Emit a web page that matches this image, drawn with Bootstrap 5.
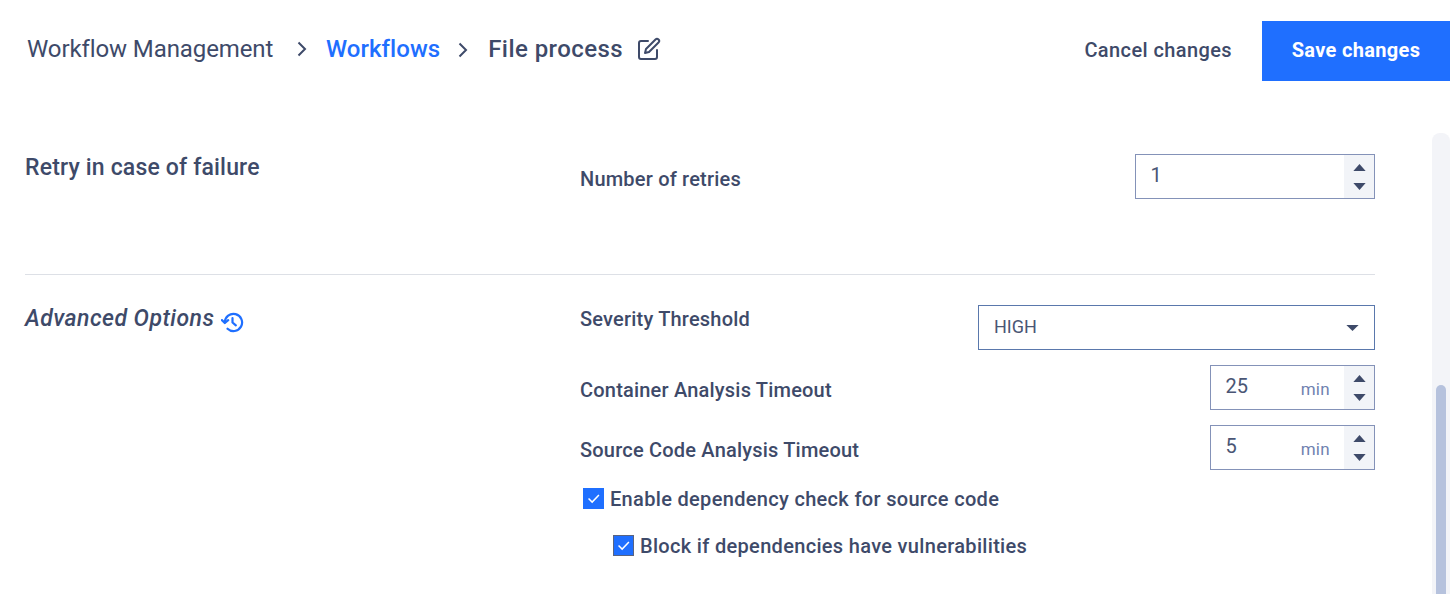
<!DOCTYPE html>
<html lang="en">
<head>
<meta charset="utf-8">
<title>File process</title>
<link href="https://cdn.jsdelivr.net/npm/bootstrap@5.3.0/dist/css/bootstrap.min.css" rel="stylesheet">
<style>
html,body{height:594px;overflow:hidden;background:#fff}
body{font-family:Roboto,"Liberation Sans",sans-serif;color:#3e4a69;font-size:19px}
.top-bar{height:81px;padding-left:27px;padding-right:2px}
.crumb{font-size:24px;line-height:28px;padding-top:17px}
.crumb-root{width:270px;letter-spacing:-.1px}
.crumb-link{color:#1f6fff;font-weight:500;text-decoration:none;letter-spacing:.05px}
.crumb-cur{font-weight:500;letter-spacing:.43px}
.chev{display:block}
.chev-a{margin-right:19px}
.chev-b{margin:2px 20px 0 18px}
.edit-ic{margin-left:14px}
.cancel-btn{font-size:20px;font-weight:500;color:#3e4a69;padding:0 0 2px;margin-right:30px;border:0;letter-spacing:.4px}
.save-btn{width:188px;height:60px;background:#1f6fff;border:0;border-radius:0;color:#fff;font-weight:700;font-size:20px;letter-spacing:.33px;padding:0 0 2px}
.page-main{padding-left:25px}
.content-col{width:1350px}
.side-col{width:555px;flex:none}
.side-title{font-size:23px;line-height:28px;font-weight:500;letter-spacing:.17px}
.retry-title{margin-top:1px}
.adv-title{letter-spacing:.45px;margin-top:1px}
.hist-ic{margin-left:7px;margin-top:3px;margin-bottom:-3px}
.retry-sec{height:194px;padding-top:72px;border-bottom:1px solid #dde0e6}
.retry-field{margin-top:1px}
.adv-sec{padding-top:29px}
.field-col{padding-top:1px}
.field-lbl{font-size:20px;font-weight:500;letter-spacing:.2px;line-height:24px}
.chk-lbl{letter-spacing:.32px}
.retry-lbl{padding-top:13px}
.box-num{height:45px;border:1px solid #8492b8;background:#fff}
.w-retry{width:240px}
.w-min{width:165px}
.box-input{border:0;border-radius:0;box-shadow:none;padding:0 0 3px 14.500px;font-size:20px;color:#4a5675;background:transparent;min-width:0;height:100%}
.unit-txt{font-size:17px;color:#6f82b0;padding-right:14px;padding-top:5px;letter-spacing:.3px}
.spin-col{width:30px;background:#f2f4f8;flex:none;padding:9px 0 8px}
.sel-box.form-select{width:397px;height:45px;border:1px solid #5a78ac;border-radius:0;font-size:18px;color:#4a5675;padding:0 15px 2px;box-shadow:none;background-image:url("data:image/svg+xml,%3Csvg xmlns='http://www.w3.org/2000/svg' viewBox='0 0 14 8'%3E%3Cpath fill='%233e4a69' d='M0 1h14L7 8z'/%3E%3C/svg%3E");background-size:13px 7px;background-position:right 15px center}
.gap-rows{row-gap:15px}
.row-sev{height:45px}
.lbl-sev{margin-top:2px}
.lbl-mid{padding-top:13px}
.chk-wrap{padding-left:3px;margin-top:18px;height:21px}
.chk-wrap-sub{padding-left:33px;margin-top:26px;height:21px}
.chk-box.form-check-input,.chk-box.form-check-input:checked{width:21px;height:21px;margin:0 6px 0 0;border-radius:0;background-color:#1f6fff;border:1px solid #1f6fff;flex:none;background-size:100% 100%;background-image:url("data:image/svg+xml,%3Csvg xmlns='http://www.w3.org/2000/svg' viewBox='0 0 21 21'%3E%3Cpath fill='none' stroke='%23fff' stroke-width='1.6' d='M5 10.500l4 4 7.500-8'/%3E%3C/svg%3E")}
.chk-box.chk-sub.form-check-input{border-color:#5a6480}
.scroll-rail{width:18px;height:461px;margin-left:57px;margin-top:52px;background:#f3f4f8;border-radius:8px 8px 0 0;padding:252px 4px 0;flex:none}
.scroll-thumb{height:100%;background:#b6c2dd;border-radius:5px 5px 0 0}
</style>
</head>
<body>
<header class="top-bar d-flex align-items-center justify-content-between">
  <nav class="d-flex align-items-center crumb" aria-label="breadcrumb">
    <span class="crumb-root">Workflow Management</span>
    <svg class="chev chev-a" width="10" height="16" viewBox="0 0 10 16" fill="none" stroke="#3e4a69" stroke-width="2"><path d="M1.500 1.500 8 8l-6.500 6.500"/></svg>
    <a href="#" class="crumb-link">Workflows</a>
    <svg class="chev chev-b" width="10" height="16" viewBox="0 0 10 16" fill="none" stroke="#3e4a69" stroke-width="2"><path d="M1.500 1.500 8 8l-6.500 6.500"/></svg>
    <span class="crumb-cur">File process</span>
    <svg class="edit-ic" width="24" height="24" viewBox="0 0 24 24" fill="none" stroke="#3e4a69" stroke-width="2" stroke-linejoin="round" stroke-linecap="round"><path d="M11 4H4a2 2 0 0 0-2 2v14a2 2 0 0 0 2 2h14a2 2 0 0 0 2-2v-7"/><path d="M18.500 2.500a2.100 2.100 0 0 1 3 3L12 15l-4 1 1-4z"/></svg>
  </nav>
  <div class="d-flex align-items-center align-self-end">
    <button type="button" class="btn cancel-btn">Cancel changes</button>
    <button type="button" class="btn save-btn">Save changes</button>
  </div>
</header>
<main class="page-main d-flex">
  <div class="content-col">
    <section class="retry-sec d-flex">
      <div class="side-col"><div class="side-title retry-title">Retry in case of failure</div></div>
      <div class="flex-grow-1 d-flex justify-content-between retry-field">
        <label class="field-lbl retry-lbl" for="retries">Number of retries</label>
        <div class="box-num w-retry d-flex">
          <input id="retries" class="form-control box-input flex-grow-1" value="1">
          <div class="spin-col d-flex flex-column justify-content-between align-items-center">
            <svg width="13" height="7" viewBox="0 0 14 8"><path fill="#3e4a69" d="M0 8h14L7 0z"/></svg>
            <svg width="13" height="7" viewBox="0 0 14 8"><path fill="#3e4a69" d="M0 0h14L7 8z"/></svg>
          </div>
        </div>
      </div>
    </section>
    <section class="adv-sec d-flex">
      <div class="side-col">
        <div class="side-title adv-title fst-italic d-flex align-items-center">Advanced Options
          <svg class="hist-ic" width="23" height="23" viewBox="0 0 24 24" fill="none" stroke="#1f6fff" stroke-width="2.300" stroke-linecap="round" stroke-linejoin="round"><path d="M4 12a9 9 0 1 1 2.800 6.500"/><path d="M1 9.500l3 3 3.500-3"/><path d="M12 7.500V12l3.500 3"/></svg>
        </div>
      </div>
      <div class="flex-grow-1 field-col">
        <div class="d-flex flex-column gap-rows">
          <div class="d-flex justify-content-between row-sev">
            <label class="field-lbl lbl-sev" for="sev">Severity Threshold</label>
            <select id="sev" class="form-select sel-box"><option>HIGH</option></select>
          </div>
          <div class="d-flex justify-content-between">
            <label class="field-lbl lbl-mid" for="cto">Container Analysis Timeout</label>
            <div class="box-num w-min d-flex">
              <input id="cto" class="form-control box-input flex-grow-1" value="25">
              <span class="unit-txt d-flex align-items-center">min</span>
              <div class="spin-col d-flex flex-column justify-content-between align-items-center">
                <svg width="13" height="7" viewBox="0 0 14 8"><path fill="#3e4a69" d="M0 8h14L7 0z"/></svg>
                <svg width="13" height="7" viewBox="0 0 14 8"><path fill="#3e4a69" d="M0 0h14L7 8z"/></svg>
              </div>
            </div>
          </div>
          <div class="d-flex justify-content-between">
            <label class="field-lbl lbl-mid" for="sto">Source Code Analysis Timeout</label>
            <div class="box-num w-min d-flex">
              <input id="sto" class="form-control box-input flex-grow-1" value="5">
              <span class="unit-txt d-flex align-items-center">min</span>
              <div class="spin-col d-flex flex-column justify-content-between align-items-center">
                <svg width="13" height="7" viewBox="0 0 14 8"><path fill="#3e4a69" d="M0 8h14L7 0z"/></svg>
                <svg width="13" height="7" viewBox="0 0 14 8"><path fill="#3e4a69" d="M0 0h14L7 8z"/></svg>
              </div>
            </div>
          </div>
        </div>
        <div class="chk-wrap d-flex align-items-center">
          <input class="form-check-input chk-box" type="checkbox" id="c1" checked>
          <label class="field-lbl chk-lbl" for="c1">Enable dependency check for source code</label>
        </div>
        <div class="chk-wrap-sub d-flex align-items-center">
          <input class="form-check-input chk-box chk-sub" type="checkbox" id="c2" checked>
          <label class="field-lbl chk-lbl" for="c2">Block if dependencies have vulnerabilities</label>
        </div>
      </div>
    </section>
  </div>
  <div class="scroll-rail"><div class="scroll-thumb"></div></div>
</main>
<script src="https://cdn.jsdelivr.net/npm/bootstrap@5.3.0/dist/js/bootstrap.bundle.min.js"></script>
</body>
</html>
